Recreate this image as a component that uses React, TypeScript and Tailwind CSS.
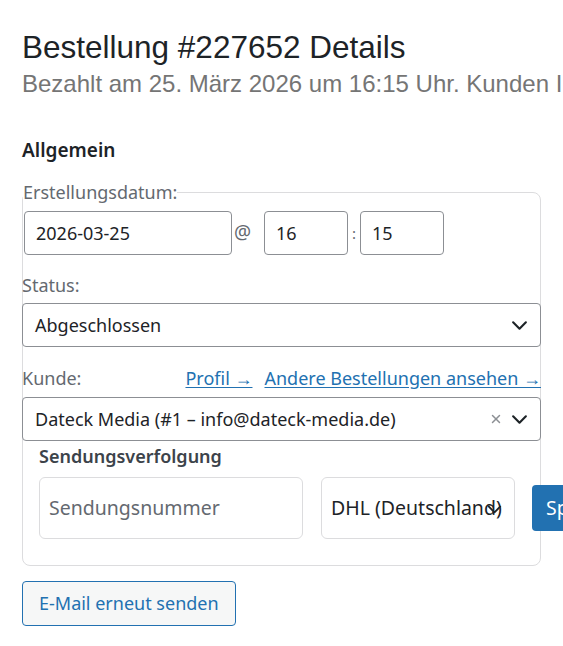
import { X } from 'lucide-react'

const body = { fontFamily: '"Noto Sans", "Open Sans", sans-serif' }
const head = { fontFamily: '"Liberation Sans", Arial, sans-serif' }

function Chevron({ className }: { className?: string }) {
  return (
    <svg viewBox="0 0 16 16" className={className} fill="none">
      <path d="M2 5l6 6 6-6" stroke="currentColor" strokeWidth="2" strokeLinecap="round" strokeLinejoin="round" />
    </svg>
  )
}

export default function App() {
  return (
    <div className="w-[563px] h-[646px] overflow-hidden bg-white text-[#1d2327]">
      <div className="pl-[22px] pt-[28px]">
        <h1 className="text-[31.5px] leading-[38px] whitespace-nowrap" style={head}>
          Bestellung #227652 Details
        </h1>
        <p className="mt-[4px] text-[24px] leading-[28px] text-[#757575] whitespace-nowrap" style={head}>
          Bezahlt am 25. März 2026 um 16:15 Uhr. Kunden IP: 127.0.0.1
        </p>

        <div style={body}>
          <h3 className="mt-[39px] text-[19px] leading-[26px] font-semibold">Allgemein</h3>

          <fieldset className="mt-[19px] w-[519px] min-w-0 border border-[#dcdcde] rounded-lg pb-[26px]">
            <legend className="text-[18px] leading-[20px] text-[#646970]">Erstellungsdatum:</legend>

            <div className="flex items-start mt-[9px] ml-px">
              <div className="w-[208px] h-[44px] border border-[#8c8f94] rounded flex items-center px-[11px] text-[18px]">2026-03-25</div>
              <span className="w-[32px] pl-[2px] text-[19px] text-[#646970] leading-[22px] mt-[10px]">@</span>
              <div className="w-[84px] h-[44px] border border-[#8c8f94] rounded flex items-center px-[11px] text-[18px]">16</div>
              <span className="w-[12px] pl-[4px] text-[15px] leading-[20px] text-[#646970] mt-[12px]">:</span>
              <div className="w-[84px] h-[44px] border border-[#8c8f94] rounded flex items-center px-[11px] text-[18px]">15</div>
            </div>

            <label className="block -ml-px mt-[18px] text-[18px] leading-[24px] text-[#646970]">Status:</label>
            <div className="-mx-px mt-[6px] h-[44px] border border-[#8c8f94] rounded flex items-center pl-[12px] pr-[12px] text-[18px]">
              <span className="flex-1">Abgeschlossen</span>
              <Chevron className="w-[17px] h-[17px] text-[#1d2327]" />
            </div>

            <div className="-mx-px mt-[19px] flex items-center text-[18px] leading-[24px] whitespace-nowrap">
              <span className="flex-1 text-[#646970]">Kunde:</span>
              <a className="text-[#2271b1] underline underline-offset-2">Profil →</a>
              <a className="ml-[12px] text-[#2271b1] underline underline-offset-2">Andere Bestellungen ansehen →</a>
            </div>
            <div className="-mx-px mt-[7px] h-[44px] border border-[#8c8f94] rounded flex items-center pl-[12px] pr-[12px] text-[18px]">
              <span className="flex-1 whitespace-nowrap">Dateck Media (#1 – info@dateck-media.de)</span>
              <X className="w-[14px] h-[14px] text-[#8c8f94] mr-[8px]" strokeWidth={2.5} />
              <Chevron className="w-[17px] h-[17px] text-[#1d2327]" />
            </div>

            <div className="pl-[16px]">
              <h4 className="mt-[3px] text-[18px] leading-[24px] font-semibold text-[#3c434a]">Sendungsverfolgung</h4>
              <div className="mt-[9px] flex items-center">
                <div className="shrink-0 w-[264px] h-[62px] border border-[#dcdcde] rounded-md flex items-center px-[9px] text-[19.5px] text-[#646970]">
                  Sendungsnummer
                </div>
                <div className="shrink-0 relative ml-[18px] w-[194px] h-[62px] border border-[#dcdcde] rounded-md flex items-center pl-[9px] text-[19.5px] whitespace-nowrap">
                  DHL (Deutschland)
                  <Chevron className="absolute left-[165px] top-[24px] w-[15px] h-[15px] text-[#1d2327]" />
                </div>
                <button className="shrink-0 ml-[17px] h-[46px] px-[14px] rounded bg-[#2271b1] text-white text-[19.5px] whitespace-nowrap">
                  Speichern
                </button>
              </div>
            </div>
          </fieldset>

          <button className="mt-[15px] h-[45px] px-[16px] border border-[#2271b1] rounded bg-[#f6f7f7] text-[#2271b1] text-[18px]">
            E-Mail erneut senden
          </button>
        </div>
      </div>
    </div>
  )
}
